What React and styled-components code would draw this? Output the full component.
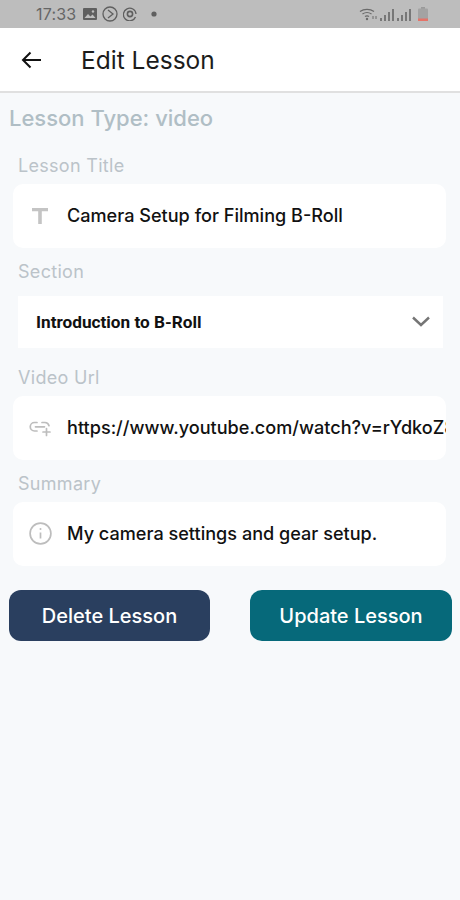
import React from 'react';
import styled, { createGlobalStyle } from 'styled-components';

const GlobalStyle = createGlobalStyle`
    html, body {
        margin: 0;
        padding: 0;
        background: #F7F9FB;
    }
`;

const Page = styled.div`
    width: 460px;
    height: 900px;
    display: flex;
    flex-direction: column;
    background: #F7F9FB;
    font-family: Inter, "Noto Sans", sans-serif;
    overflow: hidden;
`;

const StatusBar = styled.div`
    height: 28px;
    flex: none;
    display: flex;
    align-items: center;
    padding: 0 32px 0 36px;
    background: #BDBDBD;
    color: #666666;
`;

const Clock = styled.span`
    font-size: 16px;
    letter-spacing: 0.2px;
    margin-right: 7px;
`;

const StatusIcons = styled.div`
    display: flex;
    align-items: center;
    gap: 5px;
`;

const StatusRight = styled.div`
    margin-left: auto;
    display: flex;
    align-items: center;
    gap: 2px;
`;

const Header = styled.header`
    height: 63px;
    flex: none;
    display: flex;
    align-items: center;
    padding-left: 21px;
    background: #FFFFFF;
    border-bottom: 2px solid #E0E0E0;
`;

const BackIcon = styled.svg`
    width: 20px;
    height: 18px;
    margin-right: 40px;
`;

const Title = styled.h1`
    margin: 0;
    font-size: 24.5px;
    font-weight: 400;
    color: #1C1C1C;
`;

const Body = styled.main`
    display: flex;
    flex-direction: column;
    padding: 11px 8px 0 9px;
`;

const LessonType = styled.div`
    font-size: 22px;
    line-height: 28px;
    font-weight: 500;
    color: #B0BEC5;
`;

const Fields = styled.div`
    display: flex;
    flex-direction: column;
    padding-top: 22px;
`;

const Label = styled.label`
    display: block;
    padding-left: 9px;
    font-size: 18px;
    line-height: 24px;
    letter-spacing: 0.3px;
    color: #BBC3C9;
`;

const InputCard = styled.div`
    box-sizing: border-box;
    width: 433px;
    height: 64px;
    margin: ${({ $top }) => $top || 6}px 0 12px 4px;
    display: flex;
    align-items: center;
    padding: 0 0 1px 15px;
    background: #FFFFFF;
    border-radius: 10px;
    overflow: hidden;
`;

const IconSlot = styled.div`
    width: 24px;
    flex: none;
    display: flex;
    justify-content: center;
    margin-right: 15px;
    color: #BDBDBD;
`;

const InputText = styled.span`
    font-size: 18.1px;
    font-weight: 500;
    color: #111111;
    white-space: nowrap;
    margin-bottom: 1px;
`;

const SelectCard = styled.div`
    box-sizing: border-box;
    width: 425px;
    height: 52px;
    margin: 12px 0 18px 9px;
    display: flex;
    align-items: center;
    justify-content: space-between;
    padding: 0 13px 1px 18px;
    background: #FFFFFF;
`;

const SelectText = styled.span`
    font-family: Roboto, sans-serif;
    font-size: 17.2px;
    font-weight: 700;
    color: #111111;
`;

const Actions = styled.div`
    display: flex;
    justify-content: space-between;
    margin-top: 12px;
`;

const ActionButton = styled.button`
    width: ${({ $width }) => $width}px;
    height: 51px;
    border: none;
    border-radius: 12px;
    background: ${({ $color }) => $color};
    color: #FFFFFF;
    font-family: inherit;
    font-size: 20px;
    font-weight: 500;
`;

const ImageGlyph = () => (
    <svg width="14" height="12" viewBox="0 0 14 12">
        <rect width="14" height="12" rx="1" fill="#5F5F5F" />
        <path d="M1.5 10l3.5-4 2.5 2.5 2-2 3 3.5z" fill="#BDBDBD" />
        <circle cx="10" cy="3.5" r="1.2" fill="#BDBDBD" />
    </svg>
);

const ArrowCircleGlyph = () => (
    <svg width="16" height="16" viewBox="0 0 16 16" fill="none" stroke="#5F5F5F" strokeWidth="1.3">
        <circle cx="8" cy="8" r="7" />
        <path d="M6 4l5 4-5 4" />
    </svg>
);

const AtGlyph = () => (
    <svg width="14" height="14" viewBox="0 0 14 14" fill="none" stroke="#5F5F5F" strokeWidth="1.3">
        <path d="M12.5 10A6.3 6.3 0 1 1 13 7" />
        <circle cx="7" cy="7" r="2.6" strokeWidth="1.6" />
    </svg>
);

const DotGlyph = () => (
    <svg width="6" height="6" viewBox="0 0 6 6" style={{ marginLeft: 9 }}>
        <circle cx="3" cy="3" r="2.6" fill="#5F5F5F" />
    </svg>
);

const WifiGlyph = () => (
    <svg width="19" height="13" viewBox="0 0 19 13" fill="none" stroke="#6A6A6A" strokeWidth="1.2">
        <path d="M1 3.5C5 0.6 11 0.6 15 3.5" />
        <path d="M3.5 6C6.5 4 9.5 4 12.5 6" />
        <path d="M6 8.5C7.5 7.5 8.5 7.5 10 8.5" />
        <circle cx="8" cy="11" r="1.2" fill="#6A6A6A" stroke="none" />
        <path d="M14 11v-3M17 11V8" strokeWidth="1" />
    </svg>
);

const SignalGlyph = () => (
    <svg width="15" height="13" viewBox="0 0 15 13" fill="#777777">
        <rect x="0" y="10" width="2" height="3" />
        <rect x="4" y="7" width="2" height="6" />
        <rect x="8" y="4" width="2" height="9" />
        <rect x="12" y="1" width="2" height="12" />
    </svg>
);

const BatteryGlyph = () => (
    <svg width="10" height="14" viewBox="0 0 10 14" style={{ marginLeft: 4 }}>
        <rect x="3" y="0" width="4" height="2" fill="#9A9A9A" />
        <rect x="0" y="1.5" width="10" height="12.5" rx="1" fill="#A3A3A3" />
        <rect x="0" y="11.5" width="10" height="2.5" fill="#E57368" />
    </svg>
);

const LinkGlyph = () => (
    <svg width="24" height="18" viewBox="0 0 24 18" fill="none" stroke="#BDBDBD" strokeWidth="1.7" strokeLinecap="round">
        <path d="M9 3.5H6.5a4.2 4.2 0 0 0 0 8.5H9" />
        <path d="M14 3.5h3a4.2 4.2 0 0 1 4 3.2" />
        <path d="M7.5 7.8h9" />
        <path d="M18.5 9.5v7M15 13h7" />
    </svg>
);

const InfoGlyph = () => (
    <svg width="23" height="23" viewBox="0 0 23 23" fill="none" stroke="#BDBDBD" strokeWidth="1.7">
        <circle cx="11.5" cy="11.5" r="10.4" />
        <path d="M11.5 10.5v6" />
        <circle cx="11.5" cy="7" r="1" fill="#BDBDBD" stroke="none" />
    </svg>
);

const TitleGlyph = () => (
    <svg width="16" height="16" viewBox="0 0 16 16" fill="#C4C4C4">
        <path d="M0 0h16v3.2H9.8V16H6.2V3.2H0z" />
    </svg>
);

const App = () => (
    <>
        <GlobalStyle />
        <Page>
            <StatusBar>
                <Clock>17:33</Clock>
                <StatusIcons>
                    <ImageGlyph />
                    <ArrowCircleGlyph />
                    <AtGlyph />
                    <DotGlyph />
                </StatusIcons>
                <StatusRight>
                    <WifiGlyph />
                    <SignalGlyph />
                    <SignalGlyph />
                    <BatteryGlyph />
                </StatusRight>
            </StatusBar>
            <Header>
                <BackIcon viewBox="0 0 20 18" fill="none" stroke="#111111" strokeWidth="2">
                    <path d="M20 9H2" />
                    <path d="M9.5 1.5L2 9l7.5 7.5" />
                </BackIcon>
                <Title>Edit Lesson</Title>
            </Header>
            <Body>
                <LessonType>Lesson Type: video</LessonType>
                <Fields>
                    <Label>Lesson Title</Label>
                    <InputCard>
                        <IconSlot><TitleGlyph /></IconSlot>
                        <InputText>Camera Setup for Filming B-Roll</InputText>
                    </InputCard>
                    <Label>Section</Label>
                    <SelectCard>
                        <SelectText>Introduction to B-Roll</SelectText>
                        <svg width="18" height="11" viewBox="0 0 18 11" fill="none" stroke="#757575" strokeWidth="2.4">
                            <path d="M1 1.5l8 7.5 8-7.5" />
                        </svg>
                    </SelectCard>
                    <Label>Video Url</Label>
                    <InputCard>
                        <IconSlot><LinkGlyph /></IconSlot>
                        <InputText>https://www.youtube.com/watch?v=rYdkoZ8</InputText>
                    </InputCard>
                    <Label>Summary</Label>
                    <InputCard>
                        <IconSlot><InfoGlyph /></IconSlot>
                        <InputText>My camera settings and gear setup.</InputText>
                    </InputCard>
                </Fields>
                <Actions>
                    <ActionButton $width={201} $color="#2A3F5F">Delete Lesson</ActionButton>
                    <ActionButton $width={202} $color="#06697A">Update Lesson</ActionButton>
                </Actions>
            </Body>
        </Page>
    </>
);

export default App;
